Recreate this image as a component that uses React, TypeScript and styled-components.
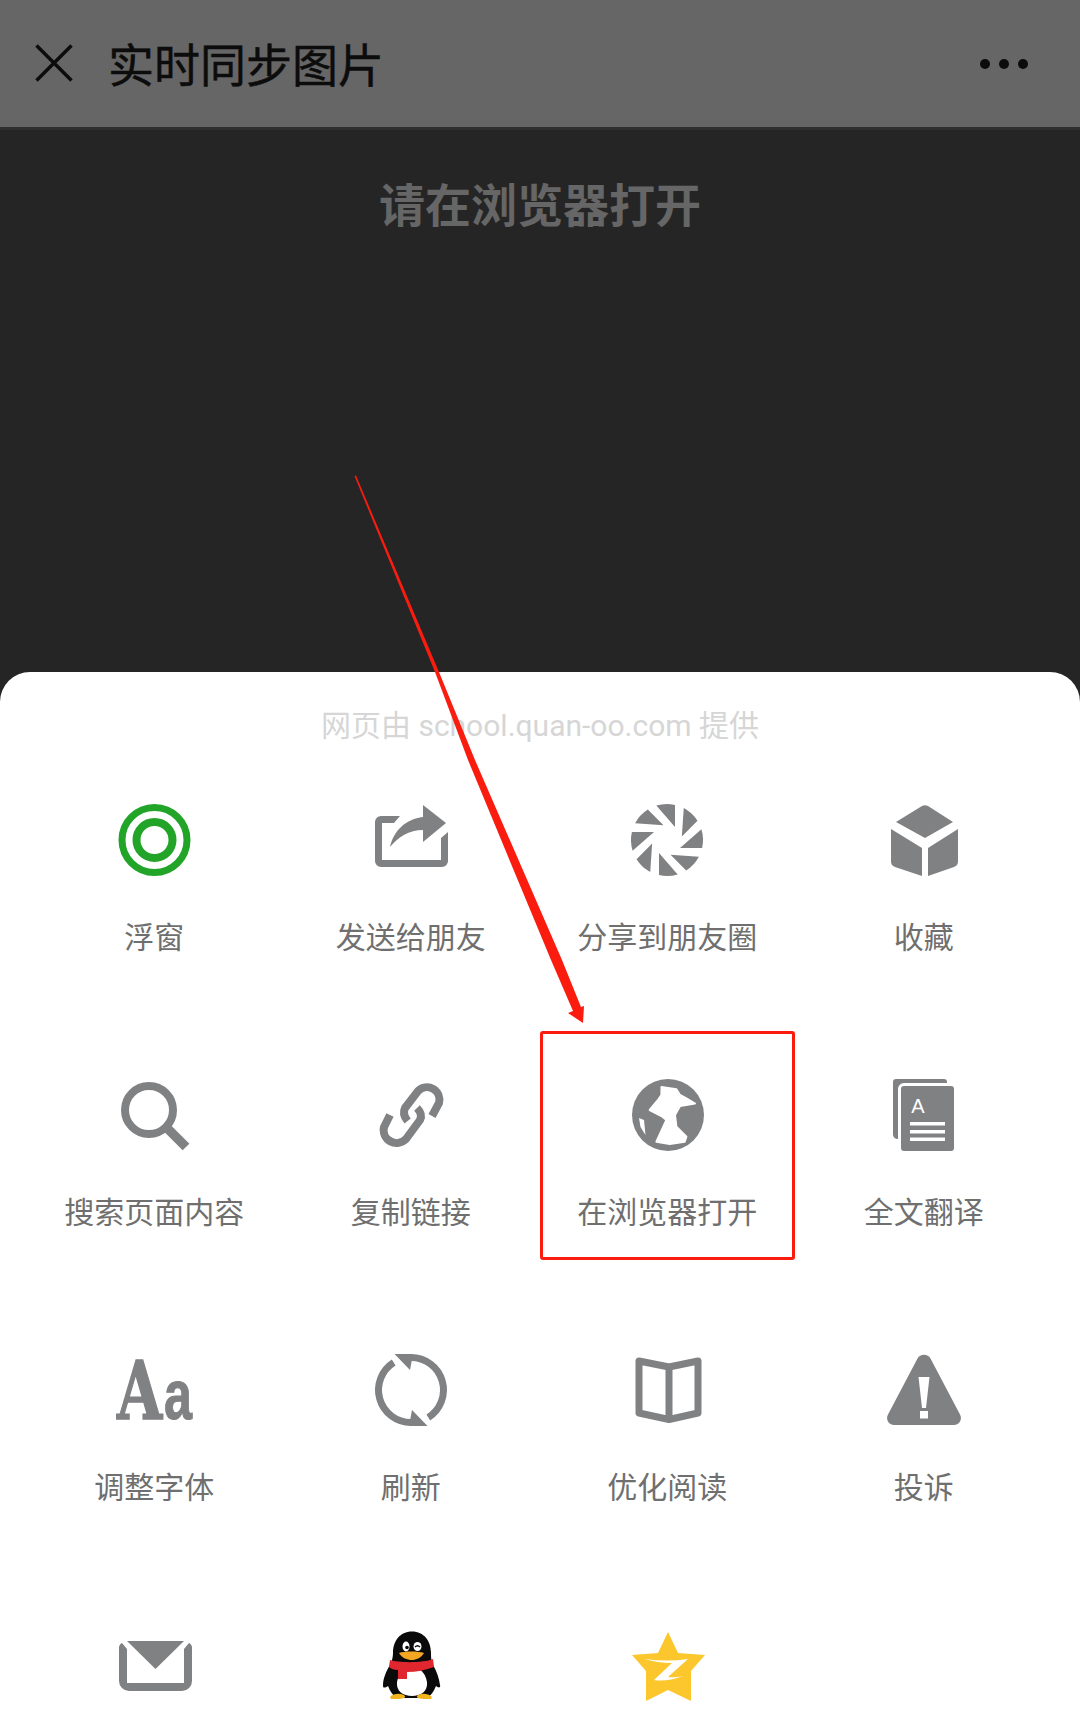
import React from "react";
import styled, { createGlobalStyle } from "styled-components";

const Global = createGlobalStyle`
  html, body { margin: 0; padding: 0; background: #fff; }
  #root { width: 1080px; height: 1713px; overflow: hidden; }
`;

const FONT = `"Noto Sans CJK SC", "Liberation Sans", sans-serif`;
const GRAY = "#808183";

const Page = styled.div`
  position: relative;
  width: 1080px;
  height: 1713px;
  overflow: hidden;
  display: flex;
  flex-direction: column;
  background: #252525;
  font-family: ${FONT};
`;

const TopBar = styled.header`
  height: 125px;
  flex: none;
  display: flex;
  align-items: center;
  padding: 0 52px 2px 35px;
  background: #666666;
  border-bottom: 3px solid #2f2f2f;
  box-sizing: content-box;
`;

const PageTitle = styled.h1`
  margin: 0 0 2px 35px;
  flex: 1;
  font-size: 46px;
  line-height: 60px;
  font-weight: 400;
  color: #0c0c0c;
  -webkit-text-stroke: 0.5px #0c0c0c;
`;

const Dots = styled.div`
  display: flex;
  gap: 9px;
  margin-top: 2px;
`;

const Dot = styled.span`
  width: 10px;
  height: 10px;
  border-radius: 50%;
  background: #0c0c0c;
`;

const Backdrop = styled.section`
  height: 542px;
  flex: none;
  display: flex;
  justify-content: center;
  padding-top: 42px;
  box-sizing: border-box;
`;

const Notice = styled.div`
  font-size: 46px;
  line-height: 60px;
  height: 60px;
  font-weight: 700;
  color: #666666;
`;

const Sheet = styled.section`
  flex: 1;
  background: #fff;
  border-radius: 30px 30px 0 0;
  padding: 30px 28px 0 26px;
`;

const Source = styled.div`
  font-family: "Roboto", "Noto Sans CJK SC", sans-serif;
  font-size: 30px;
  line-height: 48px;
  text-align: center;
  color: #d6d6d6;
  margin-left: 2px;
`;

const Grid = styled.div`
  margin-top: 45px;
  display: grid;
  grid-template-columns: repeat(4, 1fr);
  grid-auto-rows: 275px;
`;

const Cell = styled.div`
  display: flex;
  flex-direction: column;
  align-items: center;
`;

const IconSlot = styled.div`
  width: 90px;
  height: 90px;
  display: flex;
  align-items: center;
  justify-content: center;
`;

const Label = styled.div`
  margin-top: 30px;
  font-size: 30px;
  line-height: 40px;
  color: #6f6f6f;
  white-space: nowrap;
`;

const Overlay = styled.svg`
  position: absolute;
  left: 0;
  top: 0;
  pointer-events: none;
`;

const Highlight = styled.div`
  position: absolute;
  left: 540px;
  top: 1031px;
  width: 255px;
  height: 229px;
  box-sizing: border-box;
  border: 3px solid #fa1d0f;
  border-radius: 3px;
`;

const AaBox = styled.div`
  width: 90px;
  height: 90px;
  box-sizing: border-box;
  padding: 11px 0 0 8px;
  display: flex;
  align-items: baseline;
  color: ${GRAY};
  overflow: visible;
`;

const BigA = styled.span`
  display: inline-block;
  width: 47px;
  font-family: "DejaVu Serif", serif;
  font-weight: 700;
  font-size: 81px;
  line-height: 70px;
  transform: scaleX(0.72);
  transform-origin: left;
  -webkit-text-stroke: 1.5px ${GRAY};
`;

const SmallA = styled.span`
  display: inline-block;
  width: 28px;
  font-family: "Liberation Sans", sans-serif;
  font-weight: 700;
  font-size: 70px;
  line-height: 70px;
  transform: scaleX(0.72);
  transform-origin: left;
  -webkit-text-stroke: 1px ${GRAY};
`;

const Icon: React.FC<{ children: React.ReactNode; fill?: string }> = ({ children, fill = GRAY }) => (
  <svg width="90" height="90" viewBox="0 0 90 90" fill={fill}>
    {children}
  </svg>
);

const Ring = () => (
  <Icon fill="none">
    <circle cx="45.500" cy="45" r="32.500" stroke="#21a427" strokeWidth="7" />
    <circle cx="45.500" cy="45" r="18" stroke="#21a427" strokeWidth="8" />
  </Icon>
);

const Share = () => (
  <Icon>
    <path d="M34 21H15a6 6 0 0 0-6 6v39a6 6 0 0 0 6 6h61a6 6 0 0 0 6-6V37l-7 6v22H16V28h12z" />
    <path d="M24 52C28 35 40 24 57 22V10l23 18-23 19V35C43 35 32 42 24 52z" />
  </Icon>
);

const Shutter = () => (
  <Icon>
    {[0, 1, 2, 3, 4, 5, 6, 7].map((i) => (
      <path key={i} d="M53 32V9.900A36 36 0 0 0 34.300 10.600z" transform={`rotate(${i * 45} 45 45)`} />
    ))}
  </Icon>
);

const Cube = () => (
  <Icon>
    <path d="M43 11a6 6 0 0 1 6 0L74 27 46 43 17 27z" />
    <path d="M12 34l31 19v28L16 72a6 6 0 0 1-4-6z" />
    <path d="M79 34L49 53v28l26-9a6 6 0 0 0 4-6z" />
  </Icon>
);

const Search = () => (
  <Icon fill="none">
    <circle cx="40" cy="40" r="24" stroke={GRAY} strokeWidth="8" />
    <path d="M58 58l19 19" stroke={GRAY} strokeWidth="9.500" />
  </Icon>
);

const Chain = () => (
  <Icon fill="none">
    <path d="M41.600 51Q36 44 39 38L52 21A12.500 12.500 0 0 1 73 33L66 46" stroke={GRAY} strokeWidth="8" />
    <path d="M51 38Q57 44 54 50L40 69A13 13 0 0 1 18 57L24 45" stroke={GRAY} strokeWidth="8" />
  </Icon>
);

const Globe = () => (
  <Icon>
    <circle cx="46" cy="45" r="36" />
    <path
      fill="#fff"
      stroke="#fff"
      strokeWidth="2"
      strokeLinejoin="round"
      d="M39.500 17L54.400 19.300 58 25 64.400 28.300 73 33.500 58 36 53 45 54.400 56.700 64.400 66.700 62.700 71.700 47.700 74 34.400 71.700 44.400 50 39.400 46 27.700 40 36 30 39.400 25z"
    />
    <path fill="#fff" d="M17 48L22 50 23.500 65 18.500 57z" />
  </Icon>
);

const Docs = () => (
  <Icon>
    <path d="M17 9h48a3 3 0 0 1 3 3v1H25a6 6 0 0 0-6 6v50a5 5 0 0 1-5-4V12a3 3 0 0 1 3-3z" />
    <rect x="22" y="16" width="53" height="65" rx="3" />
    <text x="39" y="43" textAnchor="middle" fontFamily="Liberation Sans" fontWeight="400" fontSize="20" fill="#fff">
      A
    </text>
    <g fill="#fff">
      <rect x="31" y="52" width="35" height="3.500" />
      <rect x="31" y="60" width="35" height="3.500" />
      <rect x="31" y="67.500" width="35" height="3.500" />
    </g>
  </Icon>
);

const FontSize = () => (
  <AaBox>
    <BigA>A</BigA>
    <SmallA>a</SmallA>
  </AaBox>
);

const Refresh = () => (
  <Icon fill="none">
    <path d="M27.700 17.500A32.500 32.500 0 0 0 45 77.500" stroke={GRAY} strokeWidth="7" />
    <path d="M45 12.500A32.500 32.500 0 0 1 62.300 72.500" stroke={GRAY} strokeWidth="7" />
    <path d="M28.500 9H47L44 25z" fill={GRAY} />
    <path d="M61.500 81H43L46 65z" fill={GRAY} />
  </Icon>
);

const Book = () => (
  <Icon fill="none">
    <path
      d="M17 16L47 22 76 16V68L47 74.500 17 68zM47 22V74.500"
      stroke={GRAY}
      strokeWidth="7"
      strokeLinejoin="round"
    />
  </Icon>
);

const Warning = () => (
  <Icon>
    <path
      fillRule="evenodd"
      d="M38.500 13.500a7.500 7.500 0 0 1 13 0L81 69.500a7 7 0 0 1-6 10.500H15a7 7 0 0 1-6-10.500zM39.500 32L43 63h4l3.500-31zM41 66v7.500h8V66z"
    />
  </Icon>
);

const Mail = () => (
  <Icon>
    <path d="M18 21H75L46.500 49z" />
    <path d="M13 23L18 29V63H75V29L80 23A6 6 0 0 1 83 29V61A10 10 0 0 1 73 71H20A10 10 0 0 1 10 61V29A6 6 0 0 1 13 23z" />
  </Icon>
);

const Penguin = () => (
  <Icon>
    <path
      fill="#0a0a0a"
      d="M46 11.500C34 11.500 27 21 27 33C27 37 26 41 24 45C20 52 17 58 17 66C17 68 19 68 22 66C24 71 27 76 32 78H60C65 76 68 71 70 66C72 68 75 68 74 65C73 58 71 52 67 45C65 41 65 37 65 33C65 21 58 11.500 46 11.500z"
    />
    <path fill="#fff" d="M46 48C38 48 33 52 31 62C30 71 37 76 46 76C55 76 62 71 61 62C59 52 54 48 46 48z" />
    <ellipse cx="40" cy="26.500" rx="3.500" ry="5" fill="#fff" />
    <ellipse cx="51.500" cy="26.500" rx="4" ry="4.500" fill="#fff" />
    <circle cx="41" cy="27.500" r="1.800" fill="#0a0a0a" />
    <path d="M49 27c1.500-1.500 3.500-1.500 5 0" stroke="#0a0a0a" strokeWidth="1.500" fill="none" />
    <path fill="#f5a623" d="M33 33C38 31 52 31 58 33C55 38 50 40 46 40C41 40 36 38 33 33z" />
    <path fill="#e0262e" d="M24 40C33 43 58 43 67 39L68 47C60 50 50 52 41 52V59H32V50C28 50 25 49 23 47z" />
    <path fill="#f2b41c" d="M24 77C28 73 36 73 39 76C40 78 36 79 31 79H25zM66 77C62 73 54 73 51 76C50 78 54 79 59 79H65z" />
  </Icon>
);

const QZone = () => (
  <Icon>
    <path fill="#fcc62d" d="M46 12L56 33 83 35 69 51 69 81 46 70 24 81 24 51 10 35 36 33z" />
    <path fill="#fff" d="M23 39Q45 42 66 39L46 57Q54 58 61 56Q45 62 32 60L50 43Q35 43 23 39z" />
  </Icon>
);

const actions: { label?: string; icon: React.ReactNode }[] = [
  { label: "浮窗", icon: <Ring /> },
  { label: "发送给朋友", icon: <Share /> },
  { label: "分享到朋友圈", icon: <Shutter /> },
  { label: "收藏", icon: <Cube /> },
  { label: "搜索页面内容", icon: <Search /> },
  { label: "复制链接", icon: <Chain /> },
  { label: "在浏览器打开", icon: <Globe /> },
  { label: "全文翻译", icon: <Docs /> },
  { label: "调整字体", icon: <FontSize /> },
  { label: "刷新", icon: <Refresh /> },
  { label: "优化阅读", icon: <Book /> },
  { label: "投诉", icon: <Warning /> },
  { icon: <Mail /> },
  { icon: <Penguin /> },
  { icon: <QZone /> },
];

export default function App() {
  return (
    <Page>
      <Global />
      <TopBar>
        <svg width="38" height="38" viewBox="0 0 38 38" fill="none">
          <path d="M1.500 1.500l35 35M36.500 1.500l-35 35" stroke="#0c0c0c" strokeWidth="3.500" />
        </svg>
        <PageTitle>实时同步图片</PageTitle>
        <Dots>
          <Dot />
          <Dot />
          <Dot />
        </Dots>
      </TopBar>
      <Backdrop>
        <Notice>请在浏览器打开</Notice>
      </Backdrop>
      <Sheet>
        <Source>网页由 school.quan-oo.com 提供</Source>
        <Grid>
          {actions.map((a, i) => (
            <Cell key={i}>
              <IconSlot>{a.icon}</IconSlot>
              {a.label && <Label>{a.label}</Label>}
            </Cell>
          ))}
        </Grid>
      </Sheet>
      <Highlight />
      <Overlay width="1080" height="1713" viewBox="0 0 1080 1713">
        <path
          d="M354.500 476L356 475.500 439 672 475 760 562 960 581 1007 584 1006 583 1023 568 1013 573 1011 551 960 468 760 435 672z"
          fill="#fa1d0f"
        />
      </Overlay>
    </Page>
  );
}
